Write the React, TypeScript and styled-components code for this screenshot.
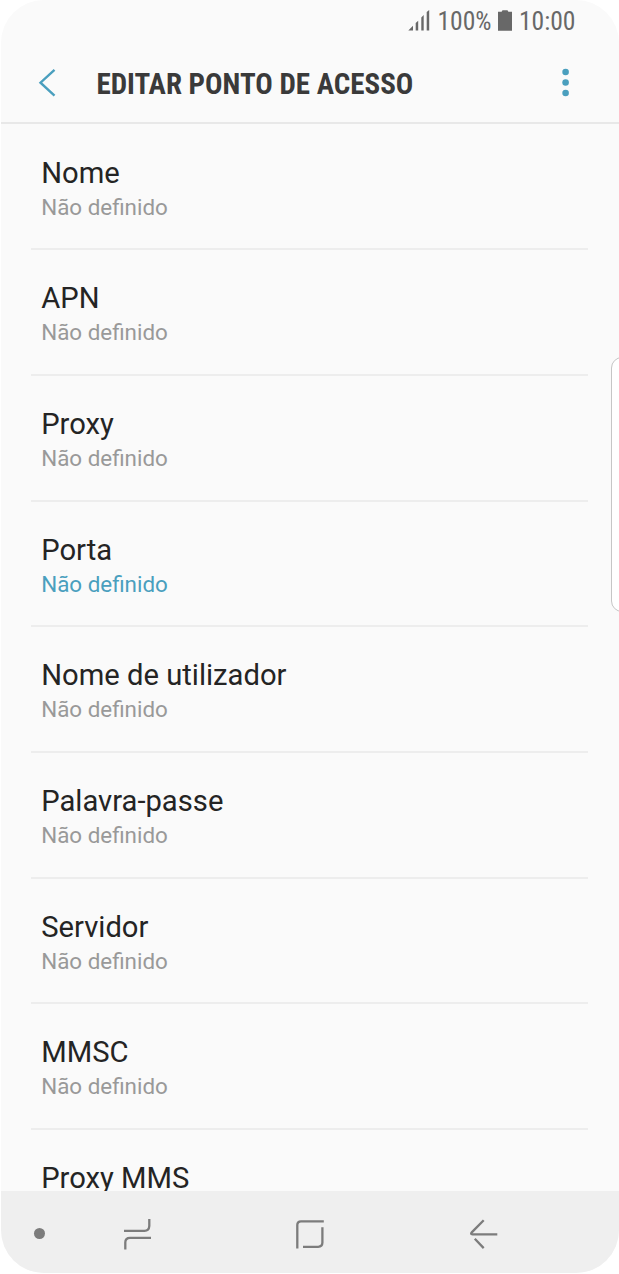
import React from "react";
import styled, { createGlobalStyle } from "styled-components";

const Global = createGlobalStyle`
  body { margin: 0; background: #fff; font-family: Roboto, sans-serif; }
  * { box-sizing: border-box; }
`;
const Screen = styled.div`
  position: relative;
  width: 618px;
  height: 1273px;
  margin-left: 1px;
  overflow: hidden;
  display: flex;
  flex-direction: column;
  background: #fafafa;
  border-radius: 43px;
`;
const Status = styled.div`
  height: 42px;
  flex: none;
  display: flex;
  align-items: center;
  justify-content: flex-end;
  padding-right: 43.5px;
  color: #686868;
`;
const StatusText = styled.span`
  font: 400 25.6px/42px "Roboto Condensed", Roboto, sans-serif;
  white-space: nowrap;
`;
const SignalIcon = styled.svg`
  width: 22px;
  height: 22px;
  margin-right: 7px;
  fill: currentColor;
`;
const BatteryIcon = styled.svg`
  width: 14px;
  height: 22px;
  margin: 0 6.5px 0 7px;
  fill: currentColor;
`;
const Header = styled.header`
  height: 82px;
  flex: none;
  display: flex;
  align-items: center;
  padding: 0 50px 0 37px;
  border-bottom: 2px solid #e8e8e8;
  color: #4a9fbe;
`;
const BackIcon = styled.svg`
  width: 20px;
  height: 30px;
  fill: none;
  stroke: currentColor;
  stroke-width: 2.4;
`;
const Title = styled.h1`
  flex: 1;
  margin: 4px 0 0 38.5px;
  font: 700 29px/34px "Roboto Condensed", Roboto, sans-serif;
  color: #3a3a3a;
  white-space: nowrap;
`;
const MoreIcon = styled.svg`
  width: 8px;
  height: 30px;
  fill: currentColor;
`;
const List = styled.main`
  flex: 1;
  min-height: 0;
  overflow: hidden;
  padding: 0.5px 31px 0 30px;
`;
const Row = styled.div`
  height: 125.7px;
  padding: 30px 10.2px 0;
  border-bottom: 2px solid #ededed;
`;
const Label = styled.div`
  font-size: 29.2px;
  line-height: 36px;
  color: #242424;
`;
const Value = styled.div<{ $active: boolean }>`
  font-size: 22.4px;
  line-height: 33.6px;
  color: ${(p) => (p.$active ? "#4a9fbe" : "#999")};
`;
const Nav = styled.nav`
  height: 82px;
  flex: none;
  display: flex;
  align-items: center;
  padding: 3px 0 0 33px;
  background: #efefef;
`;
const PageDot = styled.span`
  flex: none;
  width: 11px;
  height: 11px;
  margin-right: 77px;
  border-radius: 50%;
  background: #7c7c7c;
`;
const NavIcon = styled.svg<{ $gap: number }>`
  flex: none;
  width: 32px;
  height: 32px;
  margin-right: ${(p) => p.$gap}px;
  fill: none;
  stroke: #7c7c7c;
  stroke-width: 2.3;
`;
const EdgeHandle = styled.div`
  position: absolute;
  left: 609.5px;
  top: 356.5px;
  width: 26px;
  height: 255px;
  border: 1.5px solid #c6c6c6;
  border-radius: 11px;
  background: #fff;
`;
const rows = ["Nome", "APN", "Proxy", "Porta", "Nome de utilizador", "Palavra-passe", "Servidor", "MMSC", "Proxy MMS"];

export default function App() {
  return (
    <>
      <Global />
      <Screen>
        <Status>
          <SignalIcon viewBox="0 0 22 22">
            <path d="M.3 20.4 5 15.7v4.7zM7.7 13.1l2.5-2.4v9.7H7.7zM13.3 7.5 15.7 5v15.4h-2.4zM18.7 2 21.2 0v20.4h-2.5z" />
          </SignalIcon>
          <StatusText>100%</StatusText>
          <BatteryIcon viewBox="0 0 14 22">
            <path d="M4.5.3h5l.9 1.5H14v19H0v-19h3.6z" />
          </BatteryIcon>
          <StatusText>10:00</StatusText>
        </Status>
        <Header>
          <BackIcon viewBox="0 0 20 30">
            <path d="M16.5 2.8 2.5 15.7l14 13" />
          </BackIcon>
          <Title>EDITAR PONTO DE ACESSO</Title>
          <MoreIcon viewBox="0 0 8 30">
            <circle cx="4.6" cy="5" r="3.3" />
            <circle cx="4.6" cy="15.5" r="3.3" />
            <circle cx="4.6" cy="26" r="3.3" />
          </MoreIcon>
        </Header>
        <List>
          {rows.map((name, i) => (
            <Row key={name}>
              <Label>{name}</Label>
              {i < rows.length - 1 && <Value $active={name === "Porta"}>Não definido</Value>}
            </Row>
          ))}
        </List>
        <Nav>
          <PageDot />
          <NavIcon $gap={140} viewBox="0 0 32 32">
            <path d="M2 12.8h20.5Q27 12.8 27.3 8V1M29 19.8H8q-4.7 0-4.7 4.7V31.4" />
          </NavIcon>
          <NavIcon $gap={142} viewBox="0 0 32 32">
            <path d="M29.8 3.3H7Q3.3 3.3 3.3 7V30.5M28.4 9.3v15.3q0 4.2-4.2 4.2H9" />
          </NavIcon>
          <NavIcon $gap={0} viewBox="0 0 32 32">
            <path d="M15.7 2.2 4 14.1q-2 2.2.5 2.2H29.3M6.8 20.8l8.9 9.3" />
          </NavIcon>
        </Nav>
        <EdgeHandle />
      </Screen>
    </>
  );
}
